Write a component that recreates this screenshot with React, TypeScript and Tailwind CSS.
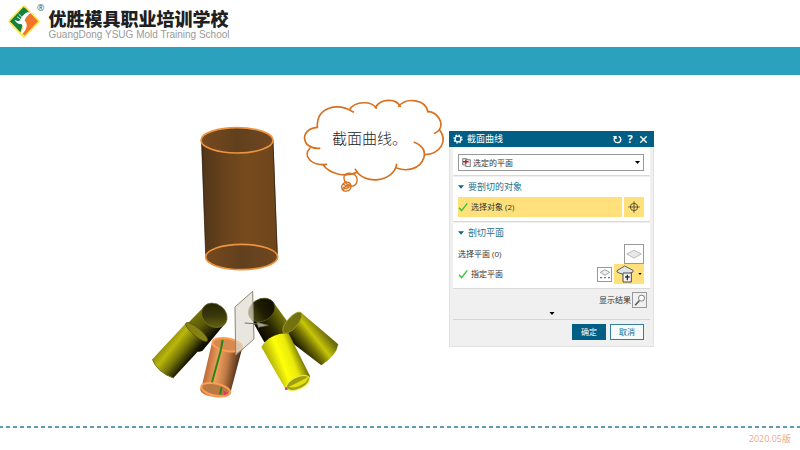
import type { ReactNode } from "react";
import { X } from "lucide-react";

function Logo() {
  return (
    <svg viewBox="0 0 110 110" className="h-9 w-9 shrink-0" aria-hidden="true">
      <path d="M51 5 Q55 1 59 5 L101 49 Q105 53 101 57 L59 101 Q55 105 51 101 L9 57 Q5 53 9 49 Z" fill="#fbe94a" />
      <path d="M58 11 L98 53 L57 96 L50 90 Z" fill="#f0762c" />
      <path d="M54 9 L70 25 L56 48 L44 86 L12 53 Z" fill="#158044" />
      <path d="M45 87 Q57 75 48 62 Q31 61 27 48 Q37 54 44 50 Q48 34 65 25 L79 25 Q60 37 57 50 Q68 64 60 78 Q56 85 50 92 Z" fill="#fff" />
      <path d="M34 39 L46 48 M39 31 L50 42" stroke="#fff" strokeWidth="3" />
    </svg>
  );
}

function Gradients() {
  return (
    <defs>
      <linearGradient id="brown">
        <stop offset="0" stopColor="#503419" />
        <stop offset=".3" stopColor="#68431c" />
        <stop offset=".6" stopColor="#774a1d" />
        <stop offset="1" stopColor="#6d451b" />
      </linearGradient>
      <linearGradient id="brownLid">
        <stop offset="0" stopColor="#78491d" />
        <stop offset=".5" stopColor="#61401e" />
        <stop offset="1" stopColor="#704720" />
      </linearGradient>
      <linearGradient id="leftFront" gradientUnits="userSpaceOnUse" x1="60" y1="175" x2="136" y2="236">
        <stop offset="0" stopColor="#817e0c" />
        <stop offset=".35" stopColor="#b9b70b" />
        <stop offset=".65" stopColor="#777708" />
        <stop offset="1" stopColor="#151500" />
      </linearGradient>
      <linearGradient id="leftBack" gradientUnits="userSpaceOnUse" x1="145" y1="105" x2="202" y2="168">
        <stop offset="0" stopColor="#77750a" />
        <stop offset=".45" stopColor="#5d5c08" />
        <stop offset="1" stopColor="#100f00" />
      </linearGradient>
      <linearGradient id="leftMouth" x1="0" y1="0" x2="1" y2="1">
        <stop offset="0" stopColor="#1d1d02" />
        <stop offset=".5" stopColor="#39370a" />
        <stop offset="1" stopColor="#777412" />
      </linearGradient>
      <linearGradient id="rightMouth">
        <stop offset="0" stopColor="#4d4b0e" />
        <stop offset=".5" stopColor="#1d1c04" />
        <stop offset="1" stopColor="#100f02" />
      </linearGradient>
      <linearGradient id="rightBack" gradientUnits="userSpaceOnUse" x1="333" y1="145" x2="408" y2="98">
        <stop offset="0" stopColor="#080800" />
        <stop offset=".45" stopColor="#272600" />
        <stop offset="1" stopColor="#787609" />
      </linearGradient>
      <linearGradient id="rightOuter" gradientUnits="userSpaceOnUse" x1="456" y1="207" x2="532" y2="146">
        <stop offset="0" stopColor="#0b0b00" />
        <stop offset=".4" stopColor="#747206" />
        <stop offset=".65" stopColor="#c6c507" />
        <stop offset="1" stopColor="#6b6a0c" />
      </linearGradient>
      <linearGradient id="rightFront" gradientUnits="userSpaceOnUse" x1="374" y1="247" x2="469" y2="210">
        <stop offset="0" stopColor="#b5b408" />
        <stop offset=".35" stopColor="#ffff0b" />
        <stop offset=".65" stopColor="#e9e90a" />
        <stop offset="1" stopColor="#5d5d00" />
      </linearGradient>
      <linearGradient id="orange" gradientUnits="userSpaceOnUse" x1="184" y1="245" x2="278" y2="262">
        <stop offset="0" stopColor="#b76835" />
        <stop offset=".35" stopColor="#f2a161" />
        <stop offset=".65" stopColor="#c17b45" />
        <stop offset="1" stopColor="#51301a" />
      </linearGradient>
    </defs>
  );
}

function TallCylinder() {
  return (
    <g transform="translate(190 115) scale(.3333)">
      <path d="M34 76 L47 425 A108 37 0 0 0 263 421 L250 73 Z" fill="url(#brown)" />
      <path d="M35 85 L47 420 M249 80 L262 418" stroke="#25190b" strokeWidth="2" />
      <ellipse cx="141" cy="76" rx="108" ry="38" fill="url(#brownLid)" stroke="#ec933f" strokeWidth="5" />
      <ellipse cx="155" cy="426" rx="108" ry="38" fill="url(#brownLid)" stroke="#ec933f" strokeWidth="5" />
    </g>
  );
}

function SplitTubes() {
  return (
    <g transform="translate(145 280) scale(.3333)">
      <path d="M177 80 L130 128 L160 216 L172 213 L244 126 Z" fill="url(#leftBack)" />
      <ellipse cx="208" cy="106" rx="41" ry="34" transform="rotate(38 208 106)" fill="url(#leftMouth)" stroke="#77742a" strokeWidth="2" />
      <path d="M124 128 L22 238 Q37 277 85 294 L187 184 Z" fill="url(#leftFront)" />
      <ellipse cx="155" cy="156" rx="42" ry="12" transform="rotate(40 155 156)" fill="#858211" stroke="#4d4b0c" strokeWidth="2" />
      <path d="M22 238 Q37 277 85 294" fill="none" stroke="#737108" strokeWidth="3" />

      <path d="M311 103 L358 187 L420 160 L430 128 L382 62 Z" fill="url(#rightBack)" />
      <ellipse cx="350" cy="90" rx="42" ry="33" transform="rotate(-31 350 90)" fill="url(#rightMouth)" stroke="#65631d" strokeWidth="2" />
      <path d="M413 157 L469 98 L580 193 Q575 226 529 256 L438 186 Z" fill="url(#rightOuter)" />
      <ellipse cx="442" cy="128" rx="40" ry="16" transform="rotate(-49 442 128)" fill="#74720e" stroke="#aaa834" strokeWidth="2" />
      <path d="M349 201 Q375 159 431 160 L495 288 Q490 320 423 330 Z" fill="url(#rightFront)" />
      <ellipse cx="459" cy="309" rx="37" ry="18" transform="rotate(-24 459 309)" fill="#a19e12" stroke="#eeee4b" strokeWidth="3" />
      <path d="M432 320 Q456 309 489 291 Q492 306 461 319 Q443 326 432 320 Z" fill="#e0df10" />
      <circle cx="424" cy="326" r="4" fill="#d2337b" />

      <path d="M202 183 L170 320 A43 19 5 0 0 255 343 L291 207 Z" fill="url(#orange)" />
      <ellipse cx="247" cy="194" rx="45" ry="19" transform="rotate(10 247 194)" fill="#d58a50" stroke="#ff9c53" strokeWidth="6" />
      <ellipse cx="212" cy="329" rx="44" ry="18" transform="rotate(12 212 329)" fill="#b87945" stroke="#ff9c53" strokeWidth="6" />
      <path d="M233 180 L226 216 L201 307 M230 322 L225 343" fill="none" stroke="#298712" strokeWidth="6" />
      <path d="M236 332 L249 340 L238 346 Z" fill="#f32d73" />

      <path d="M270 81 L323 34 L327 177 L272 226 Z" fill="#dedbd2" fillOpacity=".7" stroke="#8c8572" strokeWidth="3" />
      <path d="M299 129 L340 132" stroke="#777166" strokeWidth="3" />
      <path d="M336 127 L370 136 L340 142 Z" fill="#aaa48d" stroke="#706b55" strokeWidth="2" />
    </g>
  );
}

function Cloud() {
  return (
    <g transform="translate(295 90) scale(.3333)" fill="none" stroke="#d9701f" strokeWidth="5" strokeLinecap="round">
      <path d="M67 112 C64 50 128 37 175 66" />
      <path d="M165 57 C180 34 228 31 244 54 M241 53 C255 26 302 23 316 49 M311 49 C335 20 393 29 399 66" />
      <path d="M399 64 C429 67 447 100 433 119 Q428 127 419 130" />
      <path d="M434 120 C459 153 437 191 389 194 M358 157 C382 167 393 183 386 205 C376 237 335 246 305 234" />
      <path d="M305 223 C296 276 207 287 181 238" />
      <path d="M187 247 C151 262 108 254 85 226 M94 223 C48 229 22 197 45 174" />
      <path d="M74 175 C18 179 12 116 67 112" />
      <path d="M148 257 C155 245 184 248 186 267 C188 284 174 293 162 286 C149 280 144 266 148 257" strokeWidth="4" />
      <path d="M144 282 C154 270 169 278 168 291 C165 307 144 307 140 294 Q139 286 144 282 L162 292 M145 300 Q153 280 166 286 M145 292 Q155 300 162 290" strokeWidth="4" />
    </g>
  );
}

function Illustration() {
  return (
    <figure className="relative w-[299px] shrink-0">
      <svg viewBox="150 95 299 305" className="block w-full" aria-hidden="true">
        <Gradients />
        <TallCylinder />
        <SplitTubes />
        <Cloud />
      </svg>
      <figcaption className="absolute left-[182px] top-8 font-['Noto_Sans_CJK_SC',sans-serif] text-[15px] leading-[22px] font-light whitespace-nowrap text-[#222]">
        截面曲线。
      </figcaption>
    </figure>
  );
}

function GearIcon() {
  return (
    <svg viewBox="0 0 24 24" className="h-[10px] w-[10px]" fill="none" stroke="currentColor" aria-hidden="true">
      <circle cx="12" cy="12" r="7" strokeWidth="3" />
      <circle cx="12" cy="12" r="9.5" strokeWidth="3" strokeDasharray="3.7 3.76" />
    </svg>
  );
}

function Check() {
  return (
    <svg viewBox="0 0 28 28" className="h-[10px] w-[10px] shrink-0" fill="none" aria-hidden="true">
      <path d="M3 16 L10 24 L26 4" stroke="#35c735" strokeWidth="4" />
    </svg>
  );
}

function Caret({ className }: { className: string }) {
  return (
    <svg viewBox="0 0 10 6" className={className} fill="currentColor" aria-hidden="true">
      <path d="M0 0 H10 L5 6 Z" />
    </svg>
  );
}

function Section({ title, children }: { title: string; children: ReactNode }) {
  return (
    <section className="mb-px border-b border-[#d9d9d9] bg-white pr-[6px] pb-1 pl-[5px]">
      <h3 className="flex h-5 items-center gap-1 text-[9px] leading-3 text-[#1b7290]">
        <Caret className="h-1 w-[6px] text-[#126585]" />
        {title}
      </h3>
      {children}
    </section>
  );
}

function SectionCurveDialog() {
  return (
    <div role="dialog" aria-label="截面曲线" className="mt-9 w-[205px] shrink-0 self-start border border-[#e2e2e2] border-t-0 bg-[#f0f0f0] text-[8px] leading-3 text-[#333]">
      <header className="-mx-px flex h-4 items-center bg-[#015e84] pr-[5px] pl-1 text-white">
        <GearIcon />
        <h2 className="ml-1 flex-1 text-[9px] leading-3">截面曲线</h2>
        <div className="flex items-center gap-[3px]">
          <button type="button" aria-label="重置" className="flex w-[10px] justify-center">
            <svg viewBox="0 0 27 27" className="h-[9px] w-[9px]" fill="none" stroke="currentColor" strokeWidth="4">
              <path d="M17 4 C27 9 25 23 14 23 C3 23 1 12 7 6 M1 5 H9 V12" />
            </svg>
          </button>
          <button type="button" aria-label="帮助" className="w-[10px] font-['Open_Sans',sans-serif] text-[11px] font-bold">?</button>
          <button type="button" aria-label="关闭" className="flex w-[11px] justify-center">
            <X className="h-[11px] w-[11px]" strokeWidth={3} />
          </button>
        </div>
      </header>

      <div className="px-[3px]">
        <div className="mb-px border-b border-[#d9d9d9] bg-white pt-[7px] pr-[6px] pb-1 pl-[5px]">
          <div className="relative">
            <select aria-label="类型" className="block h-[17px] w-full appearance-none border border-[#999] bg-white pl-[14px] text-[8px] leading-3">
              <option>选定的平面</option>
            </select>
            <svg viewBox="0 0 26 26" className="pointer-events-none absolute top-1 left-1 h-[9px] w-[9px]" fill="none" aria-hidden="true">
              <path d="M2 2 H14 V5 H24 V25 H11 V20 H2 Z" fill="#f4f4f4" stroke="#444" strokeWidth="2" />
              <path d="M3 11 H19 M11 4 V18" stroke="#b02025" strokeWidth="4" />
            </svg>
            <Caret className="pointer-events-none absolute top-[7px] right-1 h-[3px] w-[5px] text-black" />
          </div>
        </div>

        <Section title="要剖切的对象">
          <div className="flex gap-[2px]">
            <div className="flex h-5 flex-1 items-center gap-[3px] bg-[#ffe07b]">
              <Check />
              选择对象 (2)
            </div>
            <button type="button" aria-label="选择对象" className="flex h-5 w-5 items-center justify-center bg-[#ffe07b]">
              <svg viewBox="0 0 36 36" className="h-3 w-3" fill="none" stroke="#62562e" strokeWidth="3">
                <circle cx="18" cy="18" r="11" />
                <path d="M18 1 V35 M1 18 H35" />
              </svg>
            </button>
          </div>
        </Section>

        <Section title="剖切平面">
          <div className="flex h-[21px] items-center justify-between">
            <span>选择平面 (0)</span>
            <button type="button" aria-label="选择平面" className="flex h-5 w-5 items-center justify-center border border-[#999]">
              <svg viewBox="0 0 42 26" className="h-[10px] w-4">
                <path d="M2 13 L21 3 L40 13 L21 24 Z" fill="#e8e8e8" stroke="#aaa" strokeWidth="2" />
              </svg>
            </button>
          </div>
          <div className="flex h-5 items-center">
            <Check />
            <span className="ml-[3px] flex-1">指定平面</span>
            <button type="button" aria-label="平面对话框" className="mr-[2px] flex h-[15px] w-[15px] items-center justify-center border border-[#999]">
              <svg viewBox="0 0 36 36" className="h-3 w-3">
                <path d="M4 13 L18 5 L32 13 L18 22 Z" fill="#eee" stroke="#777" strokeWidth="2" />
                <path d="M4 29 H8 M16 29 H20 M28 29 H32" stroke="#333" strokeWidth="4" />
              </svg>
            </button>
            <button type="button" aria-label="平面类型" className="flex h-5 w-[30px] items-center gap-1 bg-[#ffe07b] pl-[2px]">
              <svg viewBox="0 0 54 54" className="h-[18px] w-[18px]">
                <path d="M3 17 L26 3 L51 16 L51 21 L27 31 L3 21 Z" fill="#e1e5e5" stroke="#62635b" strokeWidth="3" />
                <path d="M21 24 H46 V51 H21 Z" fill="#f5f5f5" stroke="#454d50" strokeWidth="3" />
                <path d="M34 29 V46 M27 36 H41" fill="none" stroke="#333" strokeWidth="4" />
              </svg>
              <Caret className="h-[2px] w-1 text-black" />
            </button>
          </div>
        </Section>

        <div className="flex h-[18px] items-end justify-end pr-[3px]">
          <div className="flex items-center gap-px">
            <span>显示结果</span>
            <button type="button" aria-label="显示结果" className="flex h-4 w-[15px] items-center justify-center border border-[#999]">
              <svg viewBox="0 0 32 32" className="h-3 w-3" fill="none" stroke="#555">
                <circle cx="20" cy="11" r="8" strokeWidth="2" fill="#fff" />
                <path d="M14 18 L3 30" strokeWidth="4" />
              </svg>
            </button>
          </div>
        </div>
        <button type="button" aria-label="更多" className="flex h-3 w-full items-center justify-center border-b border-[#d5d5d5] text-black">
          <Caret className="h-[3px] w-[6px]" />
        </button>
        <footer className="flex justify-end gap-1 pt-1 pr-[6px] pb-[6px]">
          <button type="button" className="h-4 w-[34px] bg-[#015e84] text-white">确定</button>
          <button type="button" className="h-4 w-[34px] border border-[#34809b] bg-[#f7fafb] text-[#1b6b88]">取消</button>
        </footer>
      </div>
    </div>
  );
}

export default function App() {
  return (
    <div className="flex min-h-screen flex-col bg-white font-['Open_Sans','Noto_Sans_CJK_SC',sans-serif]">
      <header className="flex h-[47px] items-start pt-1 pl-[6px]">
        <Logo />
        <span className="-ml-[5px] text-[9px] leading-2 text-[#555]">®</span>
        <div className="ml-1 pt-[7px] font-['Liberation_Sans','Noto_Sans_CJK_SC',sans-serif]">
          <h1 className="text-[18px] leading-[18px] font-black text-[#202020]">优胜模具职业培训学校</h1>
          <p className="pt-px text-[10px] leading-[10px] text-[#999]">GuangDong YSUG Mold Training School</p>
        </div>
      </header>
      <div className="h-7 bg-[#2ca1be]" />

      <main className="flex flex-1 justify-center pt-5 pl-1">
        <Illustration />
        <SectionCurveDialog />
      </main>

      <footer className="h-6">
        <svg className="block h-[2px] w-full" aria-hidden="true">
          <line x1="-1" y1="1" x2="100%" y2="1" stroke="#5d9cb4" strokeWidth="2" strokeDasharray="4 3" />
        </svg>
        <p className="pt-[5px] pr-[9px] text-right text-[9px] leading-3 text-[#eda98a]">2020.05版</p>
      </footer>
    </div>
  );
}
